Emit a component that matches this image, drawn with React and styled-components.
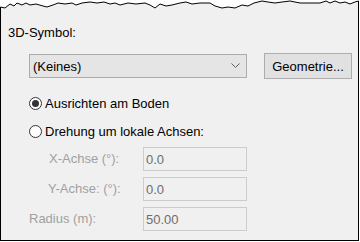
import React from 'react';
import styled, { createGlobalStyle } from 'styled-components';

const GlobalStyle = createGlobalStyle`
	html, body {
		margin: 0;
		padding: 0;
		background: #ffffff;
	}
	body {
		font-family: "Liberation Sans", Arial, sans-serif;
		font-size: 13px;
		color: #000000;
	}
`;

// Torn top edge of the screenshot
const wave = [
	[0.5, 7], [5, 8], [10, 4], [14, 6], [17, 3], [22, 5], [26, 3], [30, 5], [36, 4],
	[43, 6], [47, 7], [53, 5], [58, 3], [65, 4], [72, 3], [76, 5], [82, 3], [90, 2],
	[97, 3], [104, 2], [110, 4], [115, 3], [120, 5], [128, 3], [136, 4], [145, 3],
	[150, 5], [155, 8], [160, 4], [166, 6], [172, 5], [180, 3], [186, 2], [192, 4],
	[200, 3], [210, 3], [215, 6], [222, 8], [228, 7], [235, 8], [242, 5], [248, 6],
	[254, 3], [262, 1], [268, 2], [275, 3], [282, 2], [290, 1], [295, 2], [300, 3],
	[308, 3], [315, 3], [320, 3], [326, 1], [330, 3], [335, 1], [340, 3], [345, 2],
	[350, 4], [355, 2], [358.5, 1],
];

const wavePoints = wave.map(([x, y]) => `${x},${y}`).join(' ');

const Wrapper = styled.div`
	width: 359px;
	display: flex;
	flex-direction: column;
`;

const TornEdge = styled.svg`
	display: block;
	width: 359px;
	height: 12px;
`;

const Frame = styled.div`
	box-sizing: border-box;
	width: 359px;
	height: 229px;
	background: #f0f0f0;
	border-left: 1px solid #000000;
	border-right: 1px solid #000000;
	border-bottom: 1px solid #000000;
	padding: 13px 0 0 7px;
	display: flex;
	flex-direction: column;
`;

const Title = styled.div`
	line-height: 15px;
	height: 15px;
`;

const SymbolRow = styled.div`
	display: flex;
	align-items: center;
	margin-top: 13px;
	margin-left: 21px;
	height: 26px;
`;

const Combo = styled.div`
	box-sizing: border-box;
	width: 218px;
	height: 24px;
	background: #e5e5e5;
	border: 1px solid #acacac;
	display: flex;
	align-items: center;
	justify-content: space-between;
	padding: 0 6px 0 3px;
	line-height: 15px;
`;

const Button = styled.div`
	box-sizing: border-box;
	width: 88px;
	height: 26px;
	margin-left: 17px;
	background: #e1e1e1;
	border: 1px solid #adadad;
	display: flex;
	align-items: center;
	justify-content: center;
	line-height: 15px;
`;

const RadioRow = styled.div`
	display: flex;
	align-items: center;
	height: 16px;
	margin-left: 21px;
	margin-top: ${(p) => p.$gap}px;
	line-height: 15px;
`;

const RadioCircle = styled.span`
	box-sizing: border-box;
	position: relative;
	width: 13px;
	height: 13px;
	border-radius: 50%;
	border: 1px solid #333333;
	background: #ffffff;
	margin-right: 3px;
	flex: none;

	&::after {
		content: '';
		display: ${(p) => (p.$checked ? 'block' : 'none')};
		position: absolute;
		left: 2px;
		top: 2px;
		width: 7px;
		height: 7px;
		border-radius: 50%;
		background: #333333;
	}
`;

const FieldGrid = styled.div`
	display: grid;
	grid-template-columns: 114px 104px;
	grid-auto-rows: 24px;
	row-gap: 6px;
	margin-top: 8px;
	margin-left: 21px;
`;

const FieldLabel = styled.div`
	display: flex;
	align-items: center;
	padding-left: ${(p) => p.$indent}px;
	padding-bottom: 2px;
	color: #a0a0a0;
	line-height: 15px;
`;

const FieldInput = styled.div`
	box-sizing: border-box;
	height: 24px;
	border: 1px solid #cccccc;
	background: #f0f0f0;
	color: #6d6d6d;
	display: flex;
	align-items: center;
	padding-left: 2px;
	line-height: 15px;
`;

const fields = [
	{ label: 'X-Achse (°):', value: '0.0', indent: 20 },
	{ label: 'Y-Achse: (°):', value: '0.0', indent: 19 },
	{ label: 'Radius (m):', value: '50.00', indent: 0 },
];

function Chevron() {
	return (
		<svg width="9" height="6" viewBox="0 0 9 6">
			<polyline points="0.5,0.5 4.5,4.5 8.5,0.5" fill="none" stroke="#606060" strokeWidth="1" />
		</svg>
	);
}

export default function App() {
	return (
		<>
			<GlobalStyle />
			<Wrapper>
				<TornEdge viewBox="0 0 359 12">
					<rect x="0" y="0" width="359" height="12" fill="#ffffff" />
					<polygon points={`0.5,12 ${wavePoints} 358.5,12`} fill="#f0f0f0" />
					<polyline points={`0.5,12 ${wavePoints} 358.5,12`} fill="none" stroke="#000000" strokeWidth="1" />
				</TornEdge>
				<Frame>
					<Title>3D-Symbol:</Title>
					<SymbolRow>
						<Combo>
							<span>(Keines)</span>
							<Chevron />
						</Combo>
						<Button>Geometrie...</Button>
					</SymbolRow>
					<RadioRow $gap={16}>
						<RadioCircle $checked />
						Ausrichten am Boden
					</RadioRow>
					<RadioRow $gap={12}>
						<RadioCircle />
						Drehung um lokale Achsen:
					</RadioRow>
					<FieldGrid>
						{fields.map((f) => (
							<React.Fragment key={f.label}>
								<FieldLabel $indent={f.indent}>{f.label}</FieldLabel>
								<FieldInput>{f.value}</FieldInput>
							</React.Fragment>
						))}
					</FieldGrid>
				</Frame>
			</Wrapper>
		</>
	);
}
